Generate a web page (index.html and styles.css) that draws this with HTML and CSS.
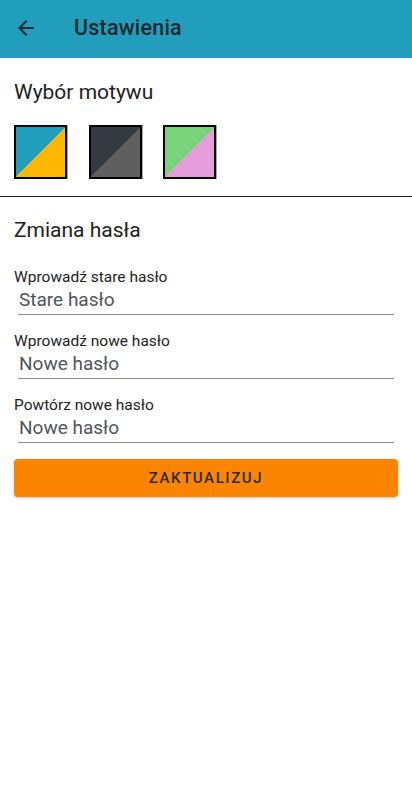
FILE: index.html
```html
<!DOCTYPE html>
<html lang="pl">
<head>
<meta charset="utf-8">
<title>Ustawienia</title>
<link rel="stylesheet" href="styles.css">
</head>
<body>
<header class="appbar">
  <svg class="back" width="24" height="24" viewBox="0 0 24 24"><path d="M20 11H7.83l5.59-5.59L12 4l-8 8 8 8 1.41-1.41L7.83 13H20v-2z" fill="#1f2930"/></svg>
  <h1 class="title">Ustawienia</h1>
</header>
<section class="theme">
  <h2 class="heading">Wybór motywu</h2>
  <div class="swatches">
    <div class="swatch swatch-blue"></div>
    <div class="swatch swatch-dark"></div>
    <div class="swatch swatch-green"></div>
  </div>
</section>
<hr class="divider">
<section class="password">
  <h2 class="heading">Zmiana hasła</h2>
  <div class="field">
    <label class="label">Wprowadź stare hasło</label>
    <div class="input">Stare hasło</div>
  </div>
  <div class="field">
    <label class="label">Wprowadź nowe hasło</label>
    <div class="input">Nowe hasło</div>
  </div>
  <div class="field">
    <label class="label">Powtórz nowe hasło</label>
    <div class="input">Nowe hasło</div>
  </div>
  <button class="btn">ZAKTUALIZUJ</button>
</section>
</body>
</html>
```
FILE: styles.css
```css
* { box-sizing: border-box; }
html, body { margin: 0; padding: 0; background: #fff; }
body { font-family: Roboto, "Noto Sans", sans-serif; color: #212121; width: 412px; height: 801px; }

.appbar {
  height: 58px;
  background: #219ebc;
  display: flex;
  align-items: center;
  padding-left: 14px;
}
.back { display: block; margin-top: -2px; }
.title {
  margin: -2px 0 0 36px;
  font-size: 21.5px;
  font-weight: 500;
  color: #1f2930;
  line-height: 24px;
  letter-spacing: 0.2px;
}

.theme { padding: 22px 14px 0; }
.heading {
  margin: 0;
  font-size: 21px;
  font-weight: 400;
  line-height: 24px;
  color: #212121;
}
.swatches {
  display: flex;
  gap: 21.5px;
  margin-top: 21px;
}
.swatch {
  width: 53px;
  height: 54px;
  border: 2px solid #000;
  box-shadow: 1px 0 0 rgba(0,0,0,0.35);
}
.swatch-blue { background: linear-gradient(to bottom right, #219ebc 50%, #ffb703 50%); }
.swatch-dark { background: linear-gradient(to bottom right, #343a42 50%, #5f5f5f 50%); }
.swatch-green { background: linear-gradient(to bottom right, #79d479 50%, #e59edb 50%); }

.divider {
  margin: 17px 0 0;
  border: 0;
  border-top: 1px solid #222;
  height: 0;
}

.password { padding: 21px 14px 0; }
.field { margin-top: 26px; }
.field + .field { margin-top: 17px; }
.label {
  display: block;
  font-size: 15.5px;
  line-height: 18px;
  color: #222;
}
.input {
  margin: 3px 4px 0;
  padding: 0 1px;
  height: 26px;
  font-size: 19px;
  line-height: 22px;
  color: #50555b;
  border-bottom: 1px solid #8a8a8a;
}
.btn {
  display: block;
  width: 100%;
  height: 38px;
  margin-top: 16px;
  border: 0;
  border-radius: 4px;
  background: #fb8500;
  color: #2a2a2a;
  font-family: Roboto, sans-serif;
  font-size: 15px;
  font-weight: 500;
  letter-spacing: 1.6px;
  box-shadow: 0 1px 3px rgba(0,0,0,0.25);
  padding: 0;
}
```
